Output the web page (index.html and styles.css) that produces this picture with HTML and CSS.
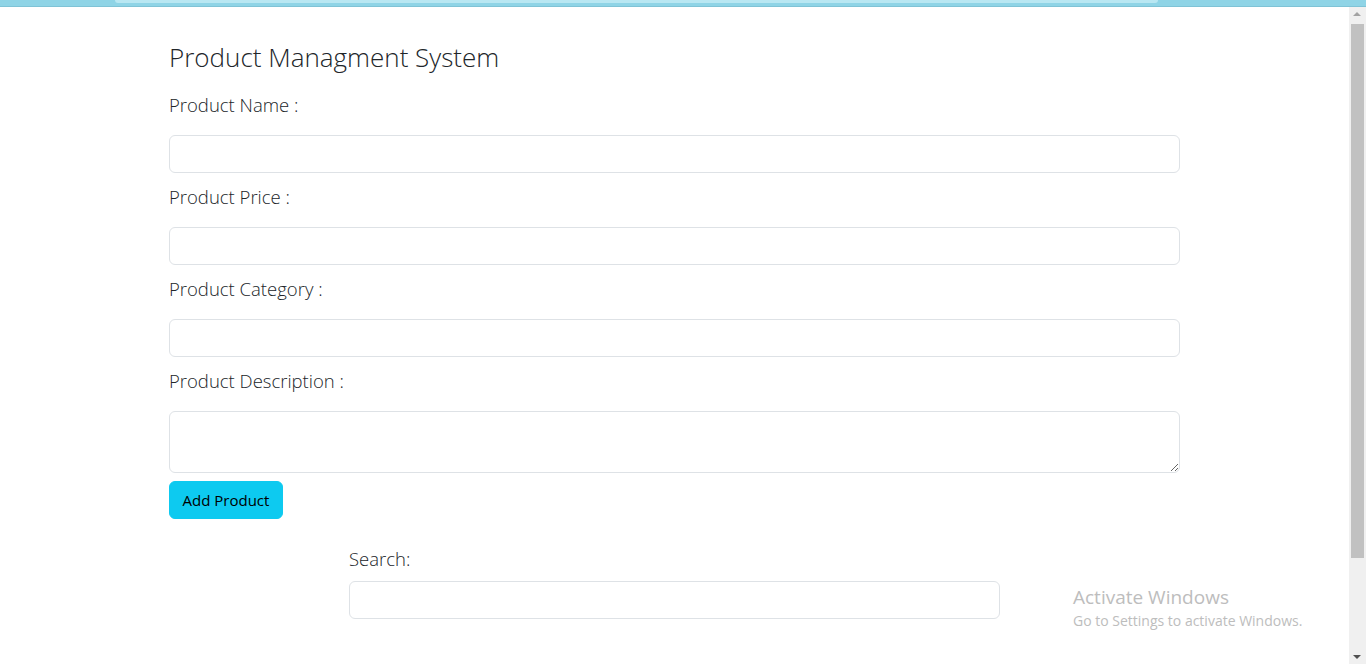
FILE: index.html
```html
<!DOCTYPE html>
<html lang="en">
<head>
<meta charset="utf-8">
<title>Product Managment System</title>
<link rel="stylesheet" href="styles.css">
</head>
<body>
  <div class="topbar"><div class="topbar-tab"></div></div>
  <div class="viewport">
    <main class="page">
      <div class="content">
        <h3 class="title">Product Managment System</h3>
        <form class="product-form">
          <label class="field-label first">Product Name :</label>
          <input class="field-input" type="text">
          <label class="field-label">Product Price :</label>
          <input class="field-input" type="text">
          <label class="field-label">Product Category :</label>
          <input class="field-input" type="text">
          <label class="field-label">Product Description :</label>
          <textarea class="field-input field-area"></textarea>
          <div class="actions"><button class="btn-add" type="button">Add Product</button></div>
        </form>
        <div class="search">
          <label class="field-label search-label">Search:</label>
          <input class="field-input" type="text">
        </div>
      </div>
    </main>
    <div class="scrollbar">
      <div class="sb-arrow sb-up"></div>
      <div class="sb-track"><div class="sb-thumb"></div></div>
      <div class="sb-arrow sb-down"></div>
    </div>
  </div>
  <div class="watermark">
    <div class="wm-title">Activate Windows</div>
    <div class="wm-sub">Go to Settings to activate Windows.</div>
  </div>
</body>
</html>
```
FILE: styles.css
```css
* { box-sizing: border-box; }
html, body { margin: 0; padding: 0; }
body {
  height: 664px;
  overflow: hidden;
  background: #fff;
  font-family: "Open Sans", "Noto Sans", sans-serif;
  color: #212529;
  position: relative;
}
.topbar {
  height: 7px;
  background: #8fd4e6;
  border-bottom: 1px solid #7fc3d6;
}
.topbar-tab {
  margin-left: 115px;
  width: 1043px;
  height: 3px;
  background: #b9e7f2;
  border-radius: 0 0 7px 7px;
}
.viewport {
  display: flex;
  height: 657px;
}
.page {
  flex: 1;
  padding-top: 33px;
}
.content {
  width: 1011px;
  margin: 0 auto;
}
.title {
  margin: 0;
  font-size: 26px;
  font-weight: 300;
  line-height: 34px;
  color: #212529;
}
.product-form {
  display: flex;
  flex-direction: column;
  align-items: stretch;
}
.field-label {
  display: block;
  font-size: 18.5px;
  font-weight: 300;
  line-height: 30px;
  margin: 9px 0 15px;
  color: #212529;
}
.field-label.first { margin-top: 16px; }
.field-input {
  display: block;
  width: 100%;
  height: 38px;
  border: 1px solid #dee2e6;
  border-radius: 6px;
  background: #fff;
  font-family: inherit;
  font-size: 16px;
  padding: 6px 12px;
  margin: 0;
}
.field-area {
  height: 62px;
  resize: vertical;
}
.actions { margin-top: 8px; }
.btn-add {
  height: 38px;
  width: 114px;
  background: #0dcaf0;
  border: 1px solid #0dcaf0;
  border-radius: 6px;
  color: #000;
  font-family: inherit;
  font-size: 15px;
  font-weight: 400;
  padding: 0 12px;
}
.search {
  width: 651px;
  margin: 25px auto 0;
}
.search-label { margin: 0 0 7px; }
.scrollbar {
  width: 17px;
  background: #f0f0f0;
  display: flex;
  flex-direction: column;
  align-items: center;
}
.sb-arrow {
  width: 17px;
  height: 17px;
  position: relative;
}
.sb-up::after, .sb-down::after {
  content: "";
  position: absolute;
  left: 4px;
  border-left: 4px solid transparent;
  border-right: 4px solid transparent;
}
.sb-up::after { top: 5px; border-bottom: 4px solid #a3a3a3; }
.sb-down::after { bottom: 5px; border-top: 4px solid #505050; }
.sb-track {
  flex: 1;
  width: 17px;
  display: flex;
  justify-content: center;
}
.sb-thumb {
  width: 13px;
  height: 534px;
  background: #c1c1c1;
}
.watermark {
  position: absolute;
  left: 1073px;
  top: 584px;
  color: #bdbdbd;
  font-family: "Open Sans", "Noto Sans", sans-serif;
  font-weight: 400;
}
.wm-title { font-size: 19px; line-height: 27px; }
.wm-sub { font-size: 14px; line-height: 20px; }
```
